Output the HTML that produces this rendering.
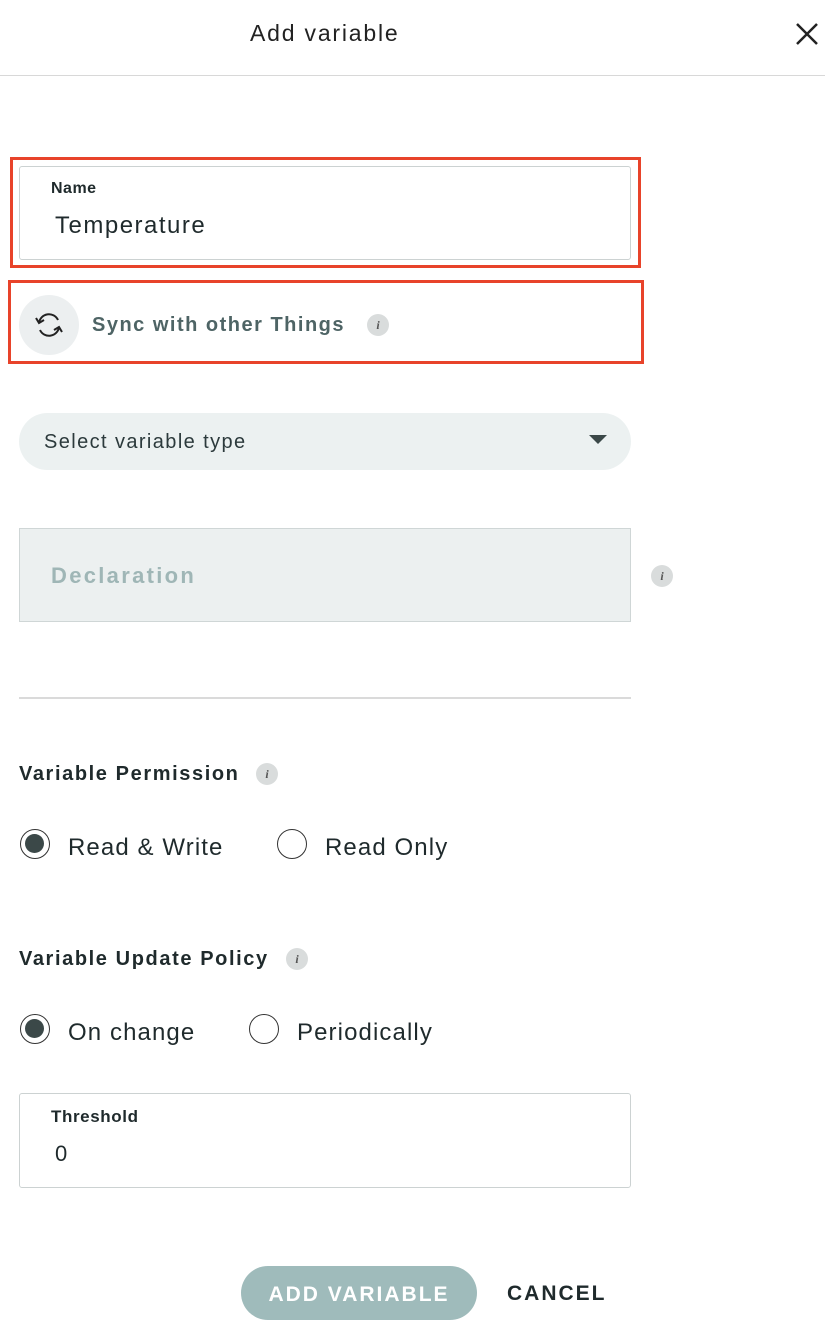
<!DOCTYPE html>
<html><head><style>
body{margin:0;width:825px;height:1333px;background:#fff;font-family:"Liberation Sans",sans-serif;color:#1f2a2c;position:relative;overflow:hidden}
.a{position:absolute}
.t{position:absolute;white-space:nowrap;line-height:1}
.info{position:absolute;width:22px;height:22px;border-radius:50%;background:#d9dcdc;color:#555;font:italic bold 12px "Liberation Serif",serif;text-align:center;line-height:22px}
.radio{position:absolute;width:30px;height:30px;border:1.5px solid #333;border-radius:50%;box-sizing:border-box}
.radio.on::after{content:"";position:absolute;left:4px;top:4px;width:19px;height:19px;border-radius:50%;background:#3b4848}
</style></head><body>
<div class="t" style="left:250px;top:22px;font-size:23px;color:#222;letter-spacing:1.8px">Add variable</div>
<svg class="a" style="left:795px;top:22px" width="24" height="24"><path d="M2 2L22 22M22 2L2 22" stroke="#222" stroke-width="2.5"/></svg>
<div class="a" style="left:0;top:75px;width:825px;height:1px;background:#d8d8d8"></div>

<div class="a" style="left:10px;top:157px;width:631px;height:111px;border:3px solid #e8432a;box-sizing:border-box"></div>
<div class="a" style="left:19px;top:166px;width:612px;height:94px;border:1px solid #ccd2d2;border-radius:3px;box-sizing:border-box"></div>
<div class="t" style="left:51px;top:181px;font-size:16px;font-weight:bold;letter-spacing:0.5px">Name</div>
<div class="t" style="left:55px;top:214px;font-size:24px;letter-spacing:1.5px">Temperature</div>

<div class="a" style="left:8px;top:280px;width:636px;height:84px;border:3px solid #e8432a;box-sizing:border-box"></div>
<div class="a" style="left:19px;top:295px;width:60px;height:60px;border-radius:50%;background:#eceff0"></div>
<svg class="a" style="left:33px;top:309px" width="32" height="32" viewBox="0 0 32 32" fill="none" stroke="#222" stroke-width="2"><path d="M6 14A10 10 0 0 1 25 11"/><path d="M3 9L6 14L11 11"/><path d="M26 18A10 10 0 0 1 7 21"/><path d="M29 23L26 18L21 21"/></svg>
<div class="t" style="left:92px;top:315px;font-size:20px;font-weight:bold;color:#4e6465;letter-spacing:1.5px">Sync with other Things</div>
<div class="info" style="left:367px;top:314px">i</div>

<div class="a" style="left:19px;top:413px;width:612px;height:57px;border-radius:29px;background:#ecf1f1"></div>
<div class="t" style="left:44px;top:432px;font-size:20px;color:#2c3a3c;letter-spacing:1.4px">Select variable type</div>
<svg class="a" style="left:589px;top:435px" width="18" height="10"><path d="M0 0H18L9 9Z" fill="#3b4848"/></svg>

<div class="a" style="left:19px;top:528px;width:612px;height:94px;background:#ecf0f0;border:1px solid #cfd6d6;box-sizing:border-box"></div>
<div class="t" style="left:51px;top:565px;font-size:22px;font-weight:bold;color:#9fb6b6;letter-spacing:2.3px">Declaration</div>
<div class="info" style="left:651px;top:565px">i</div>

<div class="a" style="left:19px;top:697px;width:612px;height:2px;background:#dadada"></div>

<div class="t" style="left:19px;top:764px;font-size:20px;font-weight:bold;letter-spacing:1.6px">Variable Permission</div>
<div class="info" style="left:256px;top:763px">i</div>
<div class="radio on" style="left:20px;top:829px"></div>
<div class="t" style="left:68px;top:836px;font-size:24px;letter-spacing:1.1px">Read &amp; Write</div>
<div class="radio" style="left:277px;top:829px"></div>
<div class="t" style="left:325px;top:836px;font-size:24px;letter-spacing:1.1px">Read Only</div>

<div class="t" style="left:19px;top:949px;font-size:20px;font-weight:bold;letter-spacing:1.6px">Variable Update Policy</div>
<div class="info" style="left:286px;top:948px">i</div>
<div class="radio on" style="left:20px;top:1014px"></div>
<div class="t" style="left:68px;top:1021px;font-size:24px;letter-spacing:1.1px">On change</div>
<div class="radio" style="left:249px;top:1014px"></div>
<div class="t" style="left:297px;top:1021px;font-size:24px;letter-spacing:1.1px">Periodically</div>

<div class="a" style="left:19px;top:1093px;width:612px;height:95px;border:1px solid #ccd2d2;border-radius:3px;box-sizing:border-box"></div>
<div class="t" style="left:51px;top:1108px;font-size:17px;font-weight:bold;letter-spacing:0.6px">Threshold</div>
<div class="t" style="left:55px;top:1143px;font-size:22px">0</div>

<div class="a" style="left:241px;top:1266px;width:236px;height:54px;border-radius:27px;background:#9fbbbb"></div>
<div class="t" style="left:241px;top:1284px;width:236px;text-align:center;font-size:21px;font-weight:bold;color:#fff;letter-spacing:2px">ADD VARIABLE</div>
<div class="t" style="left:507px;top:1283px;font-size:21px;font-weight:bold;letter-spacing:2px;color:#1f2a2c">CANCEL</div>
</body></html>
